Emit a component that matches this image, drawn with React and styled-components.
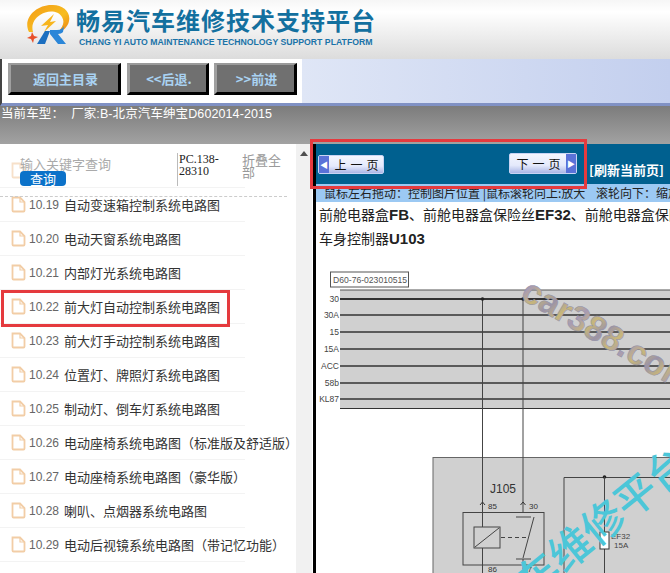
import React from 'react'
import styled, { createGlobalStyle } from 'styled-components'

const cjk = '"Noto Sans CJK SC", "Liberation Sans", sans-serif'

const GlobalStyle = createGlobalStyle`
  html, body {
    margin: 0;
    padding: 0;
    height: 573px;
    overflow: hidden;
    background: #fff;
    font-family: ${cjk};
  }
`

const Page = styled.div`
  position: relative;
  width: 670px;
  height: 573px;
  overflow: hidden;
`

const Header = styled.header`
  display: flex;
  align-items: flex-start;
  gap: 5px;
  height: 59px;
  padding: 4px 0 0 25px;
  box-sizing: border-box;
  background: linear-gradient(#f6f6f6, #fff 20%, #dcdcdc);
`

const BrandText = styled.div`
  display: flex;
  flex-direction: column;
`

const BrandTitle = styled.div`
  font-size: 24px;
  line-height: 32px;
  font-weight: 700;
  letter-spacing: 1px;
  color: #13709f;
  white-space: nowrap;
`

const BrandSub = styled.div`
  font-family: "Liberation Sans", sans-serif;
  font-size: 8.7px;
  line-height: 12px;
  font-weight: 700;
  margin-left: 3px;
  color: #1a73a8;
  white-space: nowrap;
`

const NavBar = styled.nav`
  display: flex;
  height: 47px;
  padding: 4px 0 0 6px;
  box-sizing: border-box;
  background: linear-gradient(90deg, #fff 0, #fff 300px, #dfe6f6 300px, #c3cfee 100%);
  border-left: 2px solid #444;
  border-bottom: 3px solid #8091c4;
`

const NavButton = styled.div`
  display: flex;
  align-items: center;
  justify-content: center;
  box-sizing: border-box;
  width: ${props => props.$width}px;
  height: 32px;
  margin-right: ${props => props.$gap}px;
  padding-left: 2px;
  background: #707070;
  border-style: solid;
  border-width: 2px 3px 3px 3px;
  border-color: #9a9a9a #000 #000 #a0a0a0;
  color: #a9d2f2;
  font-size: 13px;
  font-weight: 700;
`

const CarBar = styled.div`
  height: 38px;
  padding: 1px 0 0 1px;
  box-sizing: border-box;
  background: linear-gradient(#7c7c7c, #a2a2a2);
  color: #fff;
  font-family: "Liberation Sans", "Noto Sans CJK SC", sans-serif;
  font-size: 12.5px;
  letter-spacing: 0.1px;
  line-height: 14px;
  white-space: pre;
`

const Main = styled.div`
  display: flex;
  height: 429px;
`

const Sidebar = styled.aside`
  position: relative;
  width: 296px;
  overflow: hidden;
  background: #fff;
`

const List = styled.ul`
  list-style: none;
  margin: 10px 0 0;
  padding: 0;
`

const Row = styled.li`
  display: flex;
  align-items: center;
  gap: 3px;
  box-sizing: border-box;
  height: 34px;
  width: 245px;
  padding-left: 11px;
  border-bottom: 1px solid #f3f3f3;
  font-size: 13px;
  color: #333;
  white-space: nowrap;
`

const RowNumber = styled.span`
  font-family: "Liberation Sans", sans-serif;
  font-size: 12px;
  color: #666;
  margin-right: 2px;
`

const SearchPanel = styled.div`
  position: absolute;
  top: 0;
  left: 0;
  width: 287px;
  height: 52px;
  border-bottom: 1px dashed #ccc;
`

const SearchColumn = styled.div`
  position: absolute;
  left: 20px;
  top: 11px;
  display: flex;
  flex-direction: column;
  align-items: flex-start;
`

const Placeholder = styled.span`
  font-size: 13px;
  line-height: 17px;
  color: #aaa;
  white-space: nowrap;
`

const SearchButton = styled.span`
  width: 46px;
  height: 15px;
  border-radius: 4px;
  background: #0c72c9;
  color: #fff;
  font-size: 13px;
  line-height: 15px;
  text-align: center;
  margin-top: -1px;
`

const PartCode = styled.div`
  position: absolute;
  left: 177px;
  top: 9px;
  width: 46px;
  height: 33px;
  padding-left: 1px;
  border-left: 1px solid #bbb;
  font-family: "Liberation Serif", serif;
  font-size: 12px;
  line-height: 12px;
  color: #222;
`

const Collapse = styled.div`
  position: absolute;
  left: 242px;
  top: 10px;
  width: 40px;
  font-size: 13px;
  line-height: 12px;
  color: #999;
`

const Track = styled.div`
  display: flex;
  justify-content: center;
  width: 17px;
  padding-top: 7px;
  box-sizing: border-box;
  background: #f1f1f1;
  border-right: 1px solid #fff;
`

const TrackArrow = styled.span`
  width: 0;
  height: 0;
  border-left: 4px solid transparent;
  border-right: 4px solid transparent;
  border-bottom: 5px solid #505050;
`

const Viewer = styled.section`
  flex: 1;
  min-width: 0;
  overflow: hidden;
  border-left: 3px solid #000;
  background: #fff;
`

const PagerBar = styled.div`
  display: flex;
  align-items: flex-start;
  height: 40px;
  padding: 9px 0 0 2px;
  box-sizing: border-box;
  background: #00608f;
  white-space: nowrap;
`

const PageButton = styled.div`
  display: flex;
  align-items: center;
  flex-direction: ${props => props.$next ? 'row-reverse' : 'row'};
  box-sizing: border-box;
  width: ${props => props.$next ? 68 : 66}px;
  height: ${props => props.$next ? 21 : 19}px;
  margin-top: ${props => props.$next ? 0 : 2}px;
  margin-left: ${props => props.$next ? 125 : 0}px;
  border: 1px solid #c8d4f4;
  border-radius: 2px;
  background: linear-gradient(#f4f6fe, #e4e9fb 60%, #aab6e6);
  color: #111;
  font-size: 12px;
`

const PageArrow = styled.span`
  display: flex;
  align-items: center;
  justify-content: center;
  width: 10px;
  align-self: stretch;
  background: #5a72d8;
  color: #fff;
  font-size: 8px;
`

const PageLabel = styled.span`
  flex: 1;
  padding-left: 5px;
  text-align: center;
  letter-spacing: 4px;
`

const Refresh = styled.span`
  margin: 8px 0 0 12px;
  color: #fff;
  font-size: 13px;
  line-height: 18px;
  font-weight: 700;
`

const HintBar = styled.div`
  height: 18px;
  padding-left: 8px;
  background: #9cc9f3;
  color: #222;
  font-size: 12px;
  line-height: 18px;
  white-space: pre;
`

const DocTitle = styled.div`
  padding-left: 3px;
  height: ${props => props.$height}px;
  color: #222;
  font-size: 14px;
  line-height: 24px;
  white-space: nowrap;

  b {
    font-family: "Liberation Sans", sans-serif;
    font-size: 15px;
  }
`

const Schematic = styled.svg`
  display: block;
`

const Callout = styled.div`
  position: absolute;
  left: ${props => props.$left}px;
  top: ${props => props.$top}px;
  width: ${props => props.$width}px;
  height: ${props => props.$height}px;
  box-sizing: border-box;
  border: 3px solid #e53a3e;
  pointer-events: none;
`

const FileIcon = ({ faded }) => (
  <svg width="15" height="17" viewBox="0 0 15 17" fill="none" style={{ flex: 'none', opacity: faded ? 0.6 : 1 }}>
    <path d="M1.5 1.5 H9 L13.5 6 V14.5 Q13.5 15.5 12.5 15.5 H2.5 Q1.5 15.5 1.5 14.5 Z" stroke="#f2cda6" strokeWidth="1.8" />
    <path d="M9 1.5 V6 H13.5" stroke="#f2cda6" strokeWidth="1.2" />
  </svg>
)

const Logo = () => (
  <svg width="46" height="42" viewBox="0 0 46 42">
    <defs>
      <linearGradient id="ring" x1="0" y1="0" x2="1" y2="1">
        <stop offset="0" stopColor="#f39a18" />
        <stop offset="0.6" stopColor="#f7bd1f" />
        <stop offset="1" stopColor="#ec8212" />
      </linearGradient>
    </defs>
    <path d="M4 28 C-3 14 12 0 28 1 C38 1 46 8 44 17 C43 23 38 27 33 28 C38 23 40 18 37 13 C33 6 22 6 15 11 C9 15 6 21 8 28 Z" fill="url(#ring)" />
    <path d="M29 10 L16 22 L23 21 L19 28 L31 17 L25 18 Z" fill="#f7b51d" />
    <path d="M7 28 L9 32 L13 33 L9 35 L8 39 L6 35 L2 34 L6 32 Z" fill="#e8502a" />
    <path d="M12 40 L20 27 H25 L20 40 Z" fill="#1c6fc0" />
    <path d="M25 26 H32 C36 26 38 24 39 22 L38 28 C37 29 35 30 33 30 L41 40 H33 L25 30 Z" fill="#2b86d8" />
  </svg>
)

const rails = [
  ['30', 299, 2],
  ['30A', 315, 1.4],
  ['15', 332, 1.4],
  ['15A', 349, 1.4],
  ['ACC', 366, 1.4],
  ['58b', 383, 1.4],
  ['KL87', 399, 1.4],
]

const Diagram = () => (
  <Schematic width="354" height="321" viewBox="316 252 354 321" fontFamily='"Liberation Sans", sans-serif'>
    <defs>
      <linearGradient id="mark" gradientUnits="userSpaceOnUse" x1="520" y1="290" x2="545" y2="300" spreadMethod="reflect">
        <stop offset="0" stopColor="#a79bb4" />
        <stop offset="0.5" stopColor="#c8b77a" />
        <stop offset="1" stopColor="#9b93a8" />
      </linearGradient>
    </defs>
    <rect x="330.5" y="272" width="78" height="15" fill="#fff" stroke="#555" />
    <text x="333" y="283" fontSize="8.6" fill="#555">D60-76-023010515</text>
    <rect x="340" y="290" width="330" height="119" fill="#d0d0d0" />
    <line x1="340" y1="290" x2="670" y2="290" stroke="#555" />
    <line x1="340" y1="408.5" x2="670" y2="408.5" stroke="#333" />
    {rails.map(([label, y, width]) => (
      <g key={label}>
        <line x1="340" y1={y} x2="670" y2={y} stroke="#333" strokeWidth={width} />
        <text x="339" y={y + 3} fontSize="8.5" textAnchor="end" fill="#444">{label}</text>
      </g>
    ))}
    <rect x="433" y="457.5" width="240" height="120" fill="#d0d0d0" stroke="#666" />
    <line x1="482.5" y1="299" x2="482.5" y2="573" stroke="#444" />
    <line x1="523" y1="299" x2="523" y2="512" stroke="#444" />
    <circle cx="482.5" cy="299" r="1.8" fill="#222" />
    <circle cx="523" cy="299" r="1.8" fill="#222" />
    <text x="490" y="493" fontSize="12" fill="#333">J105</text>
    <text x="488" y="509" fontSize="8" fill="#333">85</text>
    <text x="529" y="509" fontSize="8" fill="#333">30</text>
    <path d="M480 505 L482.5 502 L485 505 M520.5 505 L523 502 L525.5 505" stroke="#333" fill="none" />
    <rect x="463" y="512.5" width="81" height="52.5" fill="none" stroke="#444" />
    <rect x="474" y="527" width="26" height="21" fill="#d0d0d0" stroke="#444" />
    <line x1="475" y1="547" x2="499" y2="528" stroke="#444" />
    <line x1="501" y1="537.5" x2="528" y2="537.5" stroke="#444" strokeDasharray="4 3" />
    <path d="M516 517 H531 M534 517 L523 558 M516 559 H531 M523 559 V573" stroke="#444" fill="none" />
    <text x="488" y="572" fontSize="8" fill="#333">86</text>
    <text x="523" y="572" fontSize="8" fill="#333">67</text>
    <path d="M564 573 V477.5 H670" stroke="#444" fill="none" />
    <circle cx="604.5" cy="477" r="1.8" fill="#222" />
    <line x1="604.5" y1="477" x2="604.5" y2="573" stroke="#444" />
    <rect x="600" y="532" width="9" height="17" fill="#fff" stroke="#333" />
    <text x="611" y="539" fontSize="8" fill="#444">EF32</text>
    <text x="614" y="548" fontSize="8" fill="#444">15A</text>
    <text x="519" y="298" fontSize="35" fontWeight="700" fill="url(#mark)" stroke="#8f8fa8" strokeWidth="0.5" transform="rotate(30 519 298)">car388.com</text>
    <text x="531" y="600" fontSize="42" fontWeight="500" fontFamily={cjk} fill="#4cc6d8" transform="rotate(-39 531 600)">车维修平台</text>
  </Schematic>
)

const items = [
  ['10.19', '自动变速箱控制系统电路图'],
  ['10.20', '电动天窗系统电路图'],
  ['10.21', '内部灯光系统电路图'],
  ['10.22', '前大灯自动控制系统电路图'],
  ['10.23', '前大灯手动控制系统电路图'],
  ['10.24', '位置灯、牌照灯系统电路图'],
  ['10.25', '制动灯、倒车灯系统电路图'],
  ['10.26', '电动座椅系统电路图（标准版及舒适版）'],
  ['10.27', '电动座椅系统电路图（豪华版）'],
  ['10.28', '喇叭、点烟器系统电路图'],
  ['10.29', '电动后视镜系统电路图（带记忆功能）'],
]

const App = () => (
  <Page>
    <GlobalStyle />
    <Header>
      <Logo />
      <BrandText>
        <BrandTitle>畅易汽车维修技术支持平台</BrandTitle>
        <BrandSub>CHANG YI AUTO MAINTENANCE TECHNOLOGY SUPPORT PLATFORM</BrandSub>
      </BrandText>
    </Header>
    <NavBar>
      <NavButton $width={113} $gap={6}>返回主目录</NavButton>
      <NavButton $width={82} $gap={5}>&lt;&lt;后退.</NavButton>
      <NavButton $width={83} $gap={0}>&gt;&gt;前进</NavButton>
    </NavBar>
    <CarBar>当前车型：  厂家:B-北京汽车绅宝D602014-2015</CarBar>
    <Main>
      <Sidebar>
        <List>
          <Row><FileIcon faded /></Row>
          {items.map(([number, name]) => (
            <Row key={number}>
              <FileIcon />
              <RowNumber>{number}</RowNumber>
              {name}
            </Row>
          ))}
        </List>
        <SearchPanel>
          <SearchColumn>
            <Placeholder>输入关键字查询</Placeholder>
            <SearchButton>查询</SearchButton>
          </SearchColumn>
          <PartCode>PC.138-28310</PartCode>
          <Collapse>折叠全部</Collapse>
        </SearchPanel>
      </Sidebar>
      <Track><TrackArrow /></Track>
      <Viewer>
        <PagerBar>
          <PageButton>
            <PageArrow>◀</PageArrow>
            <PageLabel>上一页</PageLabel>
          </PageButton>
          <PageButton $next>
            <PageArrow>▶</PageArrow>
            <PageLabel>下一页</PageLabel>
          </PageButton>
          <Refresh>[刷新当前页]</Refresh>
        </PagerBar>
        <HintBar>鼠标左右拖动：控制图片位置 |鼠标滚轮向上:放大    滚轮向下：缩放</HintBar>
        <DocTitle $height={24}>前舱电器盒<b>FB</b>、前舱电器盒保险丝<b>EF32</b>、前舱电器盒保险丝</DocTitle>
        <DocTitle $height={26}>车身控制器<b>U103</b></DocTitle>
        <Diagram />
      </Viewer>
    </Main>
    <Callout $left={310} $top={139} $width={277} $height={50} />
    <Callout $left={1} $top={290} $width={229} $height={37} />
  </Page>
)

export default App
